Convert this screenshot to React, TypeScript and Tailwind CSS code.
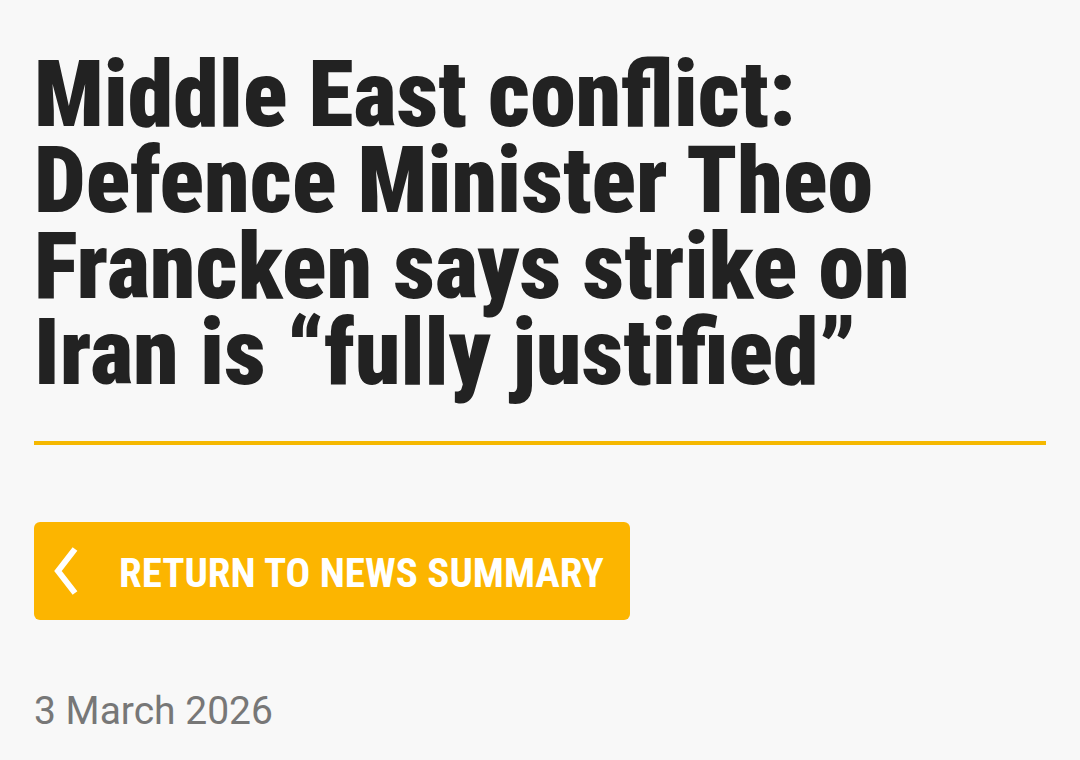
import React from "react";

export default function App() {
  return (
    <div className="w-[1080px] h-[760px] bg-[#f8f8f8] overflow-hidden px-[34px] pt-[52px]">
      <h1
        className="text-[92px] leading-[86px] text-[#222222] font-black tracking-[0px]"
        style={{ fontFamily: '"Roboto Condensed", "Liberation Sans Narrow", sans-serif' }}
      >
        Middle East conflict: Defence Minister Theo Francken says strike on Iran is “fully justified”
      </h1>
      <div className="mt-[45px] h-[4px] bg-[#f5b800] w-[1012px]" />
      <button
        className="mt-[77px] flex items-center justify-start w-[596px] h-[98px] rounded-[6px] bg-[#fcb500] pl-[19px] pr-0 text-white text-left"
      >
        <svg width="26" height="52" viewBox="0 0 26 52" className="shrink-0">
          <path d="M22 4 L5 26 L22 48" fill="none" stroke="white" strokeWidth="6" strokeLinecap="butt" strokeLinejoin="miter" />
        </svg>
        <span
          className="ml-[40px] pt-[4px] text-[41px] font-bold leading-none uppercase whitespace-nowrap shrink-0"
          style={{ fontFamily: '"Roboto Condensed", sans-serif' }}
        >
          Return to news summary
        </span>
      </button>
      <div
        className="mt-[72px] text-[39px] leading-none text-[#777777]"
        style={{ fontFamily: 'Roboto, sans-serif' }}
      >
        3 March 2026
      </div>
    </div>
  );
}
